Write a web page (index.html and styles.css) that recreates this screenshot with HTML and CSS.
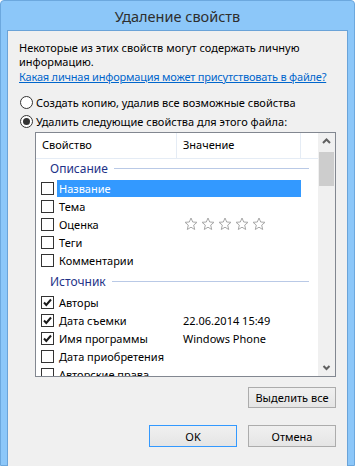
FILE: index.html
```html
<!DOCTYPE html>
<html lang="ru">
<head>
    <meta charset="UTF-8">
    <title>Удаление свойств</title>
    <link rel="stylesheet" href="styles.css">
</head>
<body>
    <div class="window">
        <div class="titlebar">Удаление свойств</div>
        <div class="client">
            <p class="intro">Некоторые из этих свойств могут содержать личную<br>информацию.</p>
            <a class="link" href="#">Какая личная информация может присутствовать в файле?</a>

            <div class="radio"><span class="radio-box"></span>Создать копию, удалив все возможные свойства</div>
            <div class="radio second"><span class="radio-box on"></span>Удалить следующие свойства для этого файла:</div>

            <div class="listbox">
                <div class="list">
                    <div class="list-head">
                        <div class="head-name">Свойство</div>
                        <div class="head-value">Значение</div>
                        <div class="head-rest"></div>
                    </div>

                    <div class="group first"><span>Описание</span><i></i></div>
                    <div class="row">
                        <span class="check"></span>
                        <span class="cells selected"><span class="name">Название</span><span class="value"></span></span>
                    </div>
                    <div class="row">
                        <span class="check"></span>
                        <span class="cells"><span class="name">Тема</span><span class="value"></span></span>
                    </div>
                    <div class="row">
                        <span class="check"></span>
                        <span class="cells"><span class="name">Оценка</span>
                            <span class="value stars">
                                <svg viewBox="0 0 14 14"><path d="M7 1 L8.7 5 L13 5.3 L9.7 8.1 L10.7 12.5 L7 10.2 L3.3 12.5 L4.3 8.1 L1 5.3 L5.3 5 Z"/></svg>
                                <svg viewBox="0 0 14 14"><path d="M7 1 L8.7 5 L13 5.3 L9.7 8.1 L10.7 12.5 L7 10.2 L3.3 12.5 L4.3 8.1 L1 5.3 L5.3 5 Z"/></svg>
                                <svg viewBox="0 0 14 14"><path d="M7 1 L8.7 5 L13 5.3 L9.7 8.1 L10.7 12.5 L7 10.2 L3.3 12.5 L4.3 8.1 L1 5.3 L5.3 5 Z"/></svg>
                                <svg viewBox="0 0 14 14"><path d="M7 1 L8.7 5 L13 5.3 L9.7 8.1 L10.7 12.5 L7 10.2 L3.3 12.5 L4.3 8.1 L1 5.3 L5.3 5 Z"/></svg>
                                <svg viewBox="0 0 14 14"><path d="M7 1 L8.7 5 L13 5.3 L9.7 8.1 L10.7 12.5 L7 10.2 L3.3 12.5 L4.3 8.1 L1 5.3 L5.3 5 Z"/></svg>
                            </span>
                        </span>
                    </div>
                    <div class="row">
                        <span class="check"></span>
                        <span class="cells"><span class="name">Теги</span><span class="value"></span></span>
                    </div>
                    <div class="row">
                        <span class="check"></span>
                        <span class="cells"><span class="name">Комментарии</span><span class="value"></span></span>
                    </div>

                    <div class="group"><span>Источник</span><i></i></div>
                    <div class="row">
                        <span class="check on"><svg viewBox="0 0 11 11"><path d="M2 5.5 L4.3 8 L9 2.5"/></svg></span>
                        <span class="cells"><span class="name">Авторы</span><span class="value"></span></span>
                    </div>
                    <div class="row">
                        <span class="check on"><svg viewBox="0 0 11 11"><path d="M2 5.5 L4.3 8 L9 2.5"/></svg></span>
                        <span class="cells"><span class="name">Дата съемки</span><span class="value">22.06.2014 15:49</span></span>
                    </div>
                    <div class="row">
                        <span class="check on"><svg viewBox="0 0 11 11"><path d="M2 5.5 L4.3 8 L9 2.5"/></svg></span>
                        <span class="cells"><span class="name">Имя программы</span><span class="value">Windows Phone</span></span>
                    </div>
                    <div class="row">
                        <span class="check"></span>
                        <span class="cells"><span class="name">Дата приобретения</span><span class="value"></span></span>
                    </div>
                    <div class="row">
                        <span class="check"></span>
                        <span class="cells"><span class="name">Авторские права</span><span class="value"></span></span>
                    </div>
                </div>

                <div class="scrollbar">
                    <svg class="arrow" viewBox="0 0 17 17"><path d="M5 10 L8.5 6.5 L12 10"/></svg>
                    <div class="thumb"></div>
                    <div class="track"></div>
                    <svg class="arrow" viewBox="0 0 17 17"><path d="M5.5 7 L8.5 10 L11.5 7"/></svg>
                </div>
            </div>

            <div class="select-row">
                <button class="btn">Выделить все</button>
            </div>

            <div class="footer">
                <button class="btn default">OK</button>
                <button class="btn">Отмена</button>
            </div>
        </div>
    </div>
</body>
</html>
```

FILE: styles.css
```css
body {
    margin: 0;
    font-family: "Noto Sans", "Open Sans", sans-serif;
    font-size: 11px;
    color: #000;
}
.window {
    width: 353px;
    height: 464px;
    background-color: #8cc7f9;
    border: 1px solid #6ca8de;
    border-radius: 4px 4px 0 0;
}
.titlebar {
    height: 29px;
    line-height: 31px;
    text-align: center;
    font-size: 14.5px;
    color: #2e2e2e;
}
.client {
    margin: 0 6px;
    height: 428px;
    background-color: #f0f0f0;
    border: 1px solid #6aa3d8;
    padding: 10px 11px 0 11px;
    box-sizing: content-box;
    width: 317px;
    display: flex;
    flex-direction: column;
}
.intro {
    margin: 0;
    line-height: 14px;
}
.link {
    margin-top: 1px;
    line-height: 14px;
    color: #0066cc;
    text-decoration: underline;
    white-space: nowrap;
    letter-spacing: -0.2px;
}
.radio {
    margin-top: 11px;
    display: flex;
    align-items: center;
    gap: 3px;
    height: 14px;
}
.radio.second {
    margin-top: 5px;
}
.radio-box {
    width: 11px;
    height: 11px;
    border: 1px solid #333;
    border-radius: 50%;
    background-color: #fff;
    display: flex;
    align-items: center;
    justify-content: center;
    margin-left: 1px;
}
.radio-box.on::after {
    content: "";
    width: 7px;
    height: 7px;
    border-radius: 50%;
    background-color: #333;
}
.listbox {
    margin: 4px 0 0 16px;
    height: 243px;
    border: 1px solid #828790;
    background-color: #fff;
    display: flex;
    overflow: hidden;
}
.list {
    width: 282px;
    overflow: hidden;
}
.list-head {
    display: flex;
    height: 25px;
    border-bottom: 1px solid #e5ecf5;
    line-height: 24px;
}
.head-name {
    width: 134px;
    padding-left: 6px;
    border-right: 1px solid #e5ecf5;
}
.head-value {
    width: 117px;
    padding-left: 6px;
    border-right: 1px solid #e5ecf5;
}
.head-rest {
    flex: 1;
}
.group {
    display: flex;
    align-items: center;
    height: 24px;
    padding: 0 9px 0 14px;
    color: #1e3287;
    font-size: 12px;
}
.group.first {
    height: 21px;
    margin-top: -1px;
}
.group i {
    flex: 1;
    height: 1px;
    margin-left: 6px;
    background-color: #b9c9e6;
}
.row {
    display: flex;
    align-items: center;
    height: 18px;
    padding-left: 5px;
}
.check {
    width: 11px;
    height: 11px;
    border: 1px solid #333;
    background-color: #fff;
    flex-shrink: 0;
    display: flex;
}
.check svg {
    width: 11px;
    height: 11px;
    fill: none;
    stroke: #1a1a1a;
    stroke-width: 2;
}
.cells {
    display: flex;
    align-items: center;
    margin-left: 3px;
    width: 244px;
    height: 17px;
}
.cells.selected {
    background-color: #3399ff;
    color: #fff;
}
.name {
    width: 118px;
    padding-left: 2px;
}
.value {
    padding-left: 6px;
    display: flex;
}
.stars {
    gap: 3px;
    padding-left: 7px;
}
.stars svg {
    width: 14px;
    height: 14px;
    fill: #fff;
    stroke: #a8a8a8;
    stroke-width: 1;
}
.scrollbar {
    width: 17px;
    background-color: #f0f0f0;
    display: flex;
    flex-direction: column;
    align-items: center;
}
.arrow {
    width: 17px;
    height: 17px;
    flex-shrink: 0;
    fill: none;
    stroke: #606060;
    stroke-width: 2;
}
.thumb {
    width: 15px;
    height: 34px;
    background-color: #cdcdcd;
    margin-top: 2px;
}
.track {
    flex: 1;
}
.select-row {
    display: flex;
    justify-content: flex-end;
    margin-top: 10px;
}
.btn {
    width: 88px;
    height: 21px;
    font-family: inherit;
    font-size: 11px;
    color: #000;
    background: linear-gradient(#f0f0f0, #e5e5e5);
    border: 1px solid #acacac;
    padding: 0;
}
.footer {
    display: flex;
    justify-content: flex-end;
    gap: 11px;
    margin-top: 17px;
}
.footer .btn {
    height: 22px;
}
.btn.default {
    border-color: #3399ff;
}
```
